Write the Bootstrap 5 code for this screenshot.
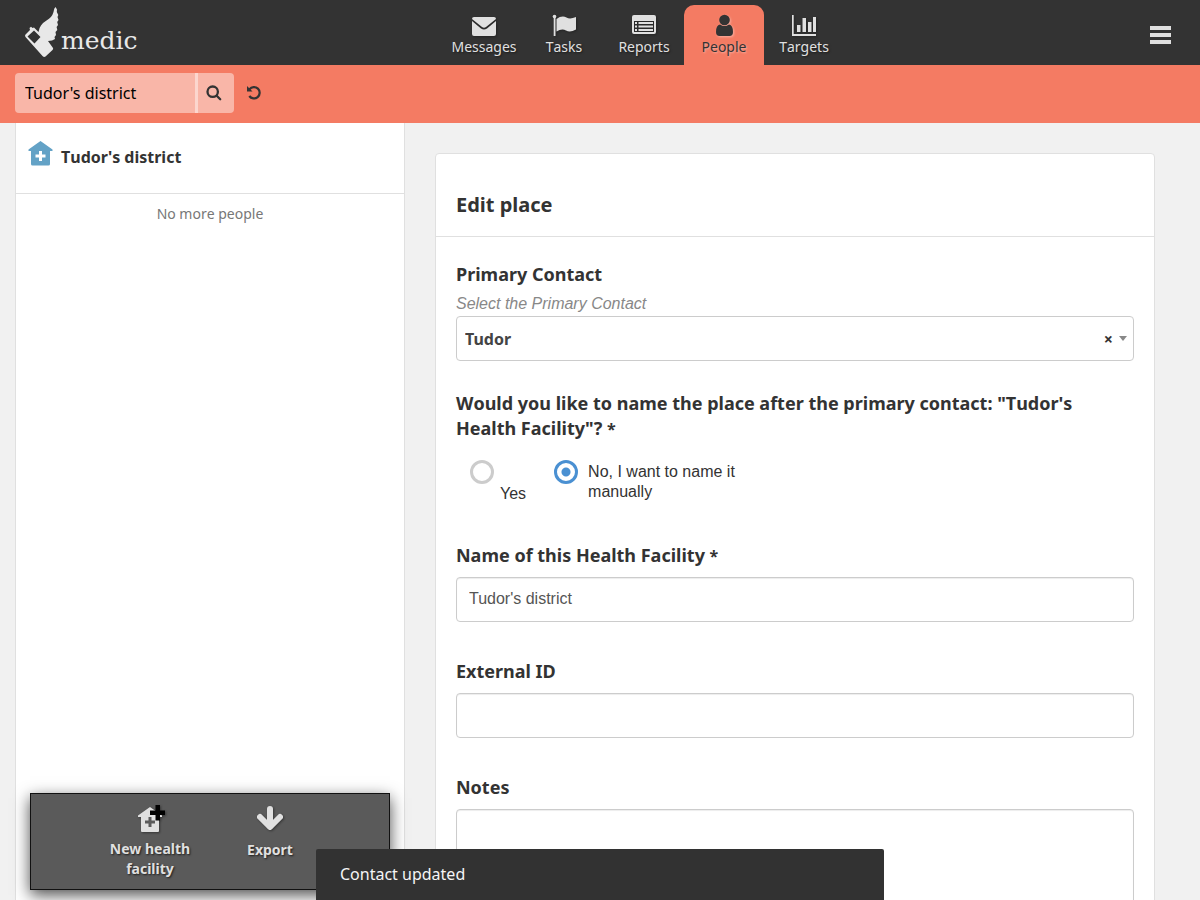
<!DOCTYPE html>
<html lang="en">
<head>
<meta charset="utf-8">
<meta name="viewport" content="width=device-width, initial-scale=1">
<title>Medic - Edit place</title>
<link href="https://cdn.jsdelivr.net/npm/bootstrap@5.3.0/dist/css/bootstrap.min.css" rel="stylesheet">
<style>
  body { font-family: "Noto Sans", sans-serif; font-size: 16px; font-kerning: none; color: #333; background: #f1f1f1; }
  .topbar { display: grid; grid-template-columns: 37% auto 1fr; height: 65px; background: #333; }
  .brand-link { color: #e8e8e8; padding: 6px 0 0 24px; }
  .brand-word { font: 25px/32px "DejaVu Serif", serif; margin: 19px 0 0 2px; }
  .tab-link { width: 80px; height: 60px; padding-top: 8px; border-radius: 10px 10px 0 0; color: #e0e0e0; font-size: 14px; line-height: 20px; text-shadow: 1px 1px 2px rgba(0,0,0,.5); text-decoration: none; }
  .tab-link svg { width: 24px; height: 24px; filter: drop-shadow(1px 1px 1px rgba(0,0,0,.3)); }
  .tab-link.current { background: #f47b63; color: #333; text-shadow: 1px 1px 2px rgba(255,255,255,.4); }
  .tab-link.current svg { filter: drop-shadow(1px 1px 1px rgba(255,255,255,.4)); }
  .menu-btn { color: #e0e0e0; margin: 5px 29px 0 0; }
  .filterbar { background: #f47b63; height: 58px; padding: 0 15px 2px; }
  .search-input { width: 183px; height: 40px; padding: 0 10px; border: 0; border-right: 3px solid #fcd6ce; border-radius: 4px 0 0 4px; background: #f9b6a8; color: #000; }
  .search-btn { width: 36px; height: 40px; padding: 0 4px 0 0; border-radius: 0 4px 4px 0; background: #f9b6a8; color: #333; }
  .reset-btn { margin-left: 12px; color: #333; }
  .page-body { padding: 0 15px; min-height: 0; }
  .list-pane { width: 33.3333%; background: #fff; border: solid #e0e0e0; border-width: 0 1px; }
  .place-row { height: 71px; padding: 0 12px 2px; border-bottom: 1px solid #e0e0e0; color: #333; text-decoration: none; }
  .end-note { margin: 10px 0; font-size: 14px; line-height: 20px; color: #777; }
  .actions { margin: 0 14px 10px; height: 97px; background: #5a5a5a; border: 1px solid #111; box-shadow: 0 5px 15px rgba(0,0,0,.7); }
  .action-btn { width: 120px; padding: 10px 15px; color: #e0e0e0; font-size: 14px; line-height: 20px; font-weight: 700; text-shadow: 1px 1px 2px rgba(0,0,0,.7); }
  .action-btn svg { filter: drop-shadow(1px 1px 1px rgba(0,0,0,.4)); margin-bottom: 6px; }
  .content-pane { padding: 30px 30px 0; overflow-y: auto; scrollbar-width: none; }
  .content-pane::-webkit-scrollbar { display: none; }
  .form-panel { background: #fff; border: 1px solid #e0e0e0; border-radius: 4px; }
  .panel-head { padding: 37px 20px 18px; border-bottom: 1px solid #e0e0e0; }
  .panel-head h1 { font-size: 20px; line-height: 27px; font-weight: 700; }
  .panel-main { padding: 25px 20px 40px; }
  .field-label { display: block; font-size: 18px; line-height: 25px; font-weight: 700; margin-bottom: 9px; }
  .required-mark { font-size: 16px; line-height: 20px; }
  .field { margin-bottom: 37px; }
  .contact-field { margin-bottom: 30px; }
  .field-input { font-family: "Liberation Sans", sans-serif; font-size: 16px; height: 45px; padding: 9px 12px 11px; border: 1px solid #ccc; border-radius: 4px; color: #555; box-shadow: inset 0 1px 1px rgba(0,0,0,.075); }
  .hint { font: italic 16px/20px "Liberation Sans", sans-serif; color: #888; margin: -2px 0 2px; }
  .contact-select { appearance: none; background: #fff; height: 45px; padding: 0 50px 0 8px; border: 1px solid #ccc; border-radius: 4px; font-weight: 700; color: #444; }
  .select-tools { position: absolute; right: 7px; top: 0; height: 45px; gap: 6px; pointer-events: none; }
  .clear-btn { font-size: 16px; font-weight: 700; line-height: 20px; pointer-events: auto; color: #333; }
  .choices { padding: 10px 14px 2px; gap: 28px; font: 16px/20px "Liberation Sans", sans-serif; }
  .choice-yes { gap: 6px; }
  .choice-no { width: 200px; gap: 10px; }
  .choice-no span { padding-top: 2px; }
  .ring { appearance: none; flex: none; width: 24px; height: 24px; margin: 0; border: 3px solid #ccc; border-radius: 50%; background: #fff; }
  .ring:checked { border-color: #4a90d2; background: radial-gradient(circle, #4a90d2 4px, #fff 5px); }
  .snackbar { position: fixed; left: 50%; bottom: 0; transform: translateX(-50%); width: 568px; max-width: 100%; height: 51px; padding: 0 24px 2px; background: #323232; color: #f5f5f5; border-radius: 2px 2px 0 0; }
  svg { display: block; }
</style>
</head>
<body>
<div class="vh-100 d-flex flex-column overflow-hidden">
  <header class="topbar flex-shrink-0">
    <a class="brand-link d-flex align-items-start text-decoration-none" href="#" aria-label="medic home">
      <svg width="35" height="52" viewBox="0 0 35 52" fill="#e8e8e8"><path fill-rule="evenodd" d="M31.500 1L33 3.500L32.800 6L34.300 9L33.500 11L34.500 14L33.200 16L34 19L32.600 21L33.300 24L31.500 26L32 29L30.500 31L31 33L28 34.500L24 35L29 42Q29.500 43 28.500 44L21.500 50.500Q20 51.500 18.500 50L1.500 31Q.500 29.500 1.500 28.500L6 24L5.500 22L7 20.800L8.500 22L10 21.500L14.500 26Q15 22 17 19.500Q19 16.500 22.500 14.500Q28 11.500 29.500 6Q30 2 31.500 1ZM10 24.500L3.500 30.500L10.500 37.500L16.500 31Z"/></svg>
      <span class="brand-word">medic</span>
    </a>
    <nav class="d-flex align-items-end" aria-label="Main">
      <a class="tab-link d-flex flex-column align-items-center" href="#"><svg viewBox="0 0 24 24" fill="currentColor"><path d="M0 6Q0 4 2 4H22Q24 4 24 6L14 14Q12 15.500 10 14L0 6ZM0 8L9 15.500Q12 17.500 15 15.500L24 8V21Q24 23 22 23H2Q0 23 0 21Z"/></svg>Messages</a>
      <a class="tab-link d-flex flex-column align-items-center" href="#"><svg viewBox="0 0 24 24" fill="currentColor"><circle cx="2.500" cy="3.500" r="1.800"/><path d="M1.700 4H3.500V23H1.700ZM4.500 6Q10 2 14.500 4.500Q18 6.500 24 4V16.500Q18 20 14 17.500Q10 15 4.500 18.500Z"/></svg>Tasks</a>
      <a class="tab-link d-flex flex-column align-items-center" href="#"><svg viewBox="0 0 24 24" fill="currentColor"><path fill-rule="evenodd" d="M2 2H22Q24 2 24 4V19Q24 21 22 21H2Q0 21 0 19V4Q0 2 2 2ZM2 8V19H22V8Z"/><path d="M3 9H5V11H3ZM6.500 9H21V11H6.500ZM3 12.500H5V14.500H3ZM6.500 12.500H21V14.500H6.500ZM3 16H5V18H3ZM6.500 16H21V18H6.500Z"/></svg>Reports</a>
      <a class="tab-link current d-flex flex-column align-items-center" href="#" aria-current="page"><svg viewBox="0 0 24 24" fill="currentColor"><circle cx="12.500" cy="7" r="5.300"/><path d="M8 11.500Q12.500 14.500 17 11.500Q21 12 21 19Q21 23 17.500 23H7.500Q4 23 4 19Q4 12 8 11.500Z"/></svg>People</a>
      <a class="tab-link d-flex flex-column align-items-center" href="#"><svg viewBox="0 0 24 24" fill="currentColor"><path d="M0 2H1.700V21H24V23H0ZM5 12H8.500V19H5ZM10.500 5H14V19H10.500ZM16 9H19.500V19H16ZM21 4H24V19H21Z"/></svg>Targets</a>
    </nav>
    <button class="menu-btn btn border-0 p-0 ms-auto" type="button" aria-label="Menu"><svg width="21" height="18" viewBox="0 0 21 18" fill="currentColor"><path d="M0 0H21V4H0ZM0 7H21V11H0ZM0 14H21V18H0Z"/></svg></button>
  </header>

  <form class="filterbar d-flex align-items-center flex-shrink-0" role="search" onsubmit="return false">
    <input class="search-input" type="text" value="Tudor's district" aria-label="Search">
    <button class="search-btn btn border-0 d-flex align-items-center justify-content-center" type="submit" aria-label="Search"><svg width="16" height="16" viewBox="0 0 16 16" fill="none" stroke="currentColor" stroke-width="2.300" stroke-linecap="round"><circle cx="6.700" cy="6.700" r="5.200"/><path d="M10.700 10.700L14.200 14.200"/></svg></button>
    <button class="reset-btn btn border-0 p-0" type="button" aria-label="Reset"><svg width="16" height="16" viewBox="0 0 16 16" fill="none" stroke="currentColor" stroke-width="2.200"><path d="M3.500 4.200A5.700 5.700 0 1 1 3.300 11"/><path d="M1 1V6.500H6.500Z" fill="currentColor" stroke="none"/></svg></button>
  </form>

  <div class="page-body d-flex flex-grow-1">
    <aside class="list-pane d-flex flex-column flex-shrink-0">
      <a class="place-row d-flex align-items-center fw-bold" href="#">
        <svg class="mb-2 me-2" width="25" height="26" viewBox="0 0 25 26"><path d="M12.500 1L24.500 9.500V11H22V24Q22 25.500 20.500 25.500H4.500Q3 25.500 3 24V11H.500V9.500Z" fill="#63a2c6"/><path d="M11 11H14V14.500H17.500V17.500H14V21H11V17.500H7.500V14.500H11Z" fill="#fff"/></svg>
        <span>Tudor's district</span>
      </a>
      <p class="end-note text-center">No more people</p>
      <div class="actions mt-auto d-flex justify-content-center">
        <button class="action-btn btn border-0 rounded-0 d-flex flex-column align-items-center" type="button"><svg width="30" height="29" viewBox="0 0 30 29"><path d="M15 3L27 11.500V13H24V27Q24 28 23 28H7Q6 28 6 27V13H3V11.500Z" fill="#e0e0e0"/><path d="M13.500 13H16.500V16.500H20V19.500H16.500V23H13.500V19.500H10V16.500H13.500Z" fill="#5a5a5a"/><path d="M20.500 1H25V6.500H30.500V11H25V16.500H20.500V11H15V6.500H20.500Z" fill="#000"/></svg>New health facility</button>
        <button class="action-btn btn border-0 rounded-0 d-flex flex-column align-items-center" type="button"><svg width="28" height="30" viewBox="0 0 28 30" fill="none" stroke="#e0e0e0" stroke-width="6" stroke-linejoin="round" stroke-linecap="round"><path d="M14 5V22"/><path d="M4 13L14 23L24 13"/></svg>Export</button>
      </div>
    </aside>

    <main class="content-pane flex-grow-1">
      <form class="form-panel" onsubmit="return false">
        <div class="panel-head"><h1 class="m-0">Edit place</h1></div>
        <div class="panel-main">
          <div class="contact-field">
            <label class="field-label" for="contact">Primary Contact</label>
            <p class="hint">Select the Primary Contact</p>
            <div class="position-relative">
              <select class="contact-select w-100" id="contact"><option>Tudor</option></select>
              <div class="select-tools d-flex align-items-center">
                <button class="clear-btn btn border-0 p-0" type="button" aria-label="Clear">×</button>
                <svg width="8" height="5" viewBox="0 0 8 5"><path d="M0 0H8L4 5Z" fill="#888"/></svg>
              </div>
            </div>
          </div>
          <fieldset class="field">
            <legend class="field-label">Would you like to name the place after the primary contact: "Tudor's Health Facility"? <span class="required-mark">*</span></legend>
            <div class="choices d-flex align-items-start">
              <label class="choice-yes d-flex align-items-start"><input class="ring" type="radio" name="naming"><span class="pt-4">Yes</span></label>
              <label class="choice-no d-flex align-items-start"><input class="ring" type="radio" name="naming" checked><span>No, I want to name it manually</span></label>
            </div>
          </fieldset>
          <div class="field">
            <label class="field-label" for="fname">Name of this Health Facility <span class="required-mark">*</span></label>
            <input class="field-input w-100" id="fname" type="text" value="Tudor's district">
          </div>
          <div class="field">
            <label class="field-label" for="ext">External ID</label>
            <input class="field-input w-100" id="ext" type="text">
          </div>
          <div class="field">
            <label class="field-label" for="notes">Notes</label>
            <textarea class="field-input w-100 h-auto" id="notes" rows="6"></textarea>
          </div>
        </div>
      </form>
    </main>
  </div>
</div>
<div class="snackbar d-flex align-items-center" role="status">Contact updated</div>
<script src="https://cdn.jsdelivr.net/npm/bootstrap@5.3.0/dist/js/bootstrap.bundle.min.js"></script>
</body>
</html>
